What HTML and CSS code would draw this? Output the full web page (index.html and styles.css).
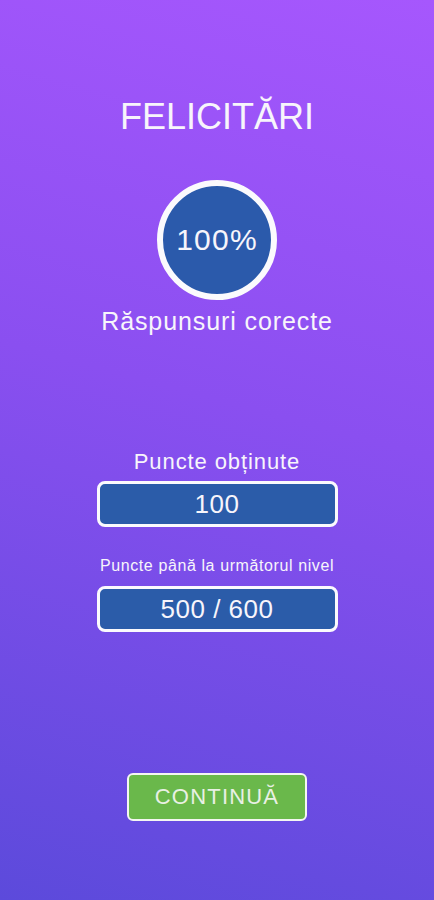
FILE: index.html
```html
<!DOCTYPE html>
<html lang="ro">
<head>
    <meta charset="UTF-8">
    <meta name="viewport" content="width=device-width, initial-scale=1.0">
    <title>Felicitări</title>
    <link rel="stylesheet" href="styles.css">
</head>
<body>
    <div class="screen">
        <h1 class="title">FELICITĂRI</h1>

        <div class="score-circle">100%</div>
        <p class="subtitle">Răspunsuri corecte</p>

        <p class="label">Puncte obținute</p>
        <div class="value-box">100</div>

        <p class="label small">Puncte până la următorul nivel</p>
        <div class="value-box next">500 / 600</div>

        <button class="continue">CONTINUĂ</button>
    </div>
</body>
</html>
```

FILE: styles.css
```css
body {
    margin: 0;
    font-family: "Liberation Sans", Arial, sans-serif;
    color: #f7f5fb;
}
.screen {
    min-height: 900px;
    display: flex;
    flex-direction: column;
    align-items: center;
    background: linear-gradient(195deg, #a657fd 0%, #8a4ff0 45%, #5c4adb 100%);
}
.title {
    margin: 97px 0 0;
    font-size: 36px;
    font-weight: normal;
    line-height: 40px;
}
.score-circle {
    margin-top: 43px;
    width: 120px;
    height: 120px;
    box-sizing: border-box;
    border: 6px solid #fbfafd;
    border-radius: 50%;
    background-color: #2b5aab;
    display: flex;
    align-items: center;
    justify-content: center;
    font-size: 30px;
    letter-spacing: 1.2px;
}
.subtitle {
    margin: 6px 0 0;
    font-size: 25px;
    line-height: 30px;
    letter-spacing: 0.9px;
}
.label {
    margin: 112px 0 0;
    font-size: 22px;
    line-height: 28px;
    letter-spacing: 0.9px;
}
.label.small {
    margin-top: 29px;
    font-size: 16px;
    line-height: 20px;
    letter-spacing: 0.6px;
}
.value-box {
    margin-top: 5px;
    width: 241px;
    height: 46px;
    box-sizing: border-box;
    border: 3px solid #fbfafd;
    border-radius: 8px;
    background-color: #2b5ca9;
    display: flex;
    align-items: center;
    justify-content: center;
    font-size: 26px;
    letter-spacing: 0.5px;
}
.value-box.next {
    margin-top: 10px;
}
.continue {
    margin-top: 141px;
    width: 180px;
    height: 48px;
    border: 2px solid #f4f6f2;
    border-radius: 6px;
    background-color: #6ab84b;
    color: #e9f0e4;
    font-family: "Liberation Sans", Arial, sans-serif;
    font-size: 22px;
    letter-spacing: 1.2px;
    padding: 0;
}
```
